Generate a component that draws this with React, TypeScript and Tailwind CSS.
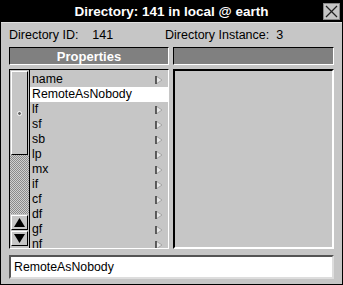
import React from "react";

const items = ["name", "RemoteAsNobody", "lf", "sf", "sb", "lp", "mx", "if", "cf", "df", "gf", "nf"];

function Tri() {
  return (
    <svg width="8" height="8" viewBox="0 0 8 8" className="block">
      <polygon points="1,0 7,4 1,8" fill="#e6e6e6" stroke="#9a9a9a" strokeWidth="0.8" />
      <line x1="1" y1="0" x2="1" y2="8" stroke="#333" strokeWidth="1.4" />
    </svg>
  );
}

function ArrowBtn({ up }: { up: boolean }) {
  return (
    <div className="w-[17px] h-[15px] bg-[#c6c6c6] border border-t-white border-l-white border-r-black border-b-black flex items-center justify-center">
      <svg width="11" height="9" viewBox="0 0 11 9">
        {up ? <polygon points="5.5,0 11,9 0,9" fill="#000" /> : <polygon points="0,0 11,0 5.5,9" fill="#000" />}
      </svg>
    </div>
  );
}

export default function App() {
  return (
    <div
      className="w-[343px] h-[285px] bg-[#c6c6c6] border border-black flex flex-col overflow-hidden"
      style={{ fontFamily: '"Liberation Sans", Arial, sans-serif' }}
    >
      <div className="h-[21px] bg-black relative flex items-center justify-center shrink-0">
        <span className="text-white font-bold text-[13.5px] leading-none">Directory: 141 in local @ earth</span>
        <div className="absolute right-[2px] top-[2px] w-[17px] h-[17px] bg-[#c6c6c6] border border-[#888] flex items-center justify-center">
          <svg width="13" height="13" viewBox="0 0 13 13">
            <line x1="1" y1="1" x2="12" y2="12" stroke="#222" strokeWidth="1.3" />
            <line x1="12" y1="1" x2="1" y2="12" stroke="#222" strokeWidth="1.3" />
          </svg>
        </div>
      </div>
      <div className="border-t border-[#e0e0e0] flex-1 flex flex-col pl-[8px] pr-[7px]">
        <div className="h-[22px] mt-[1px] flex items-center text-[12.5px] text-black">
          <span className="w-[156px] whitespace-pre">Directory ID:    141</span>
          <span className="whitespace-pre">Directory Instance:  3</span>
        </div>
        <div className="flex gap-[4px] mt-[1px]">
          <div className="w-[160px] h-[18px] bg-[#808080] border border-t-black border-l-black border-r-white border-b-white flex items-center justify-center">
            <span className="text-white font-bold text-[13px] leading-none">Properties</span>
          </div>
          <div className="w-[161px] h-[18px] bg-[#808080] border border-t-black border-l-black border-r-white border-b-white" />
        </div>
        <div className="flex gap-[4px] mt-[4px]">
          <div className="w-[160px] h-[180px] border border-t-black border-l-black border-r-white border-b-white flex overflow-hidden">
            <div className="w-[20px] flex flex-col border-r border-black">
              <div className="h-[84px] mx-[1px] mt-[1px] bg-[#c6c6c6] border border-t-white border-l-white border-r-black border-b-black flex items-center justify-center">
                <div className="w-[5px] h-[5px] rounded-full bg-[#666] border border-white" />
              </div>
              <div className="flex-1 bg-[repeating-conic-gradient(#8a8a8a_0_25%,#d0d0d0_0_50%)] bg-[length:2px_2px]" />
              <div className="pl-[1px] flex flex-col gap-[1px] pb-[2px] pt-[1px]">
                <ArrowBtn up />
                <ArrowBtn up={false} />
              </div>
            </div>
            <div className="flex-1 flex flex-col pt-[2px]">
              {items.map((it, i) => (
                <div
                  key={it}
                  className={`h-[15px] shrink-0 flex items-center justify-between pl-[2px] pr-[5px] text-[12.3px] leading-none text-black ${i === 1 ? "bg-white" : ""}`}
                >
                  <span>{it}</span>
                  {i !== 1 && <Tri />}
                </div>
              ))}
            </div>
          </div>
          <div className="w-[161px] h-[180px] border-[2px] border-t-black border-l-black border-r-white border-b-white" />
        </div>
        <div className="mt-[6px] w-[325px] h-[24px] bg-white border-[2px] border-t-[#555] border-l-[#555] border-r-[#ddd] border-b-[#ddd] flex items-center pl-[3px] text-[12.3px] text-black">
          RemoteAsNobody
        </div>
      </div>
    </div>
  );
}
